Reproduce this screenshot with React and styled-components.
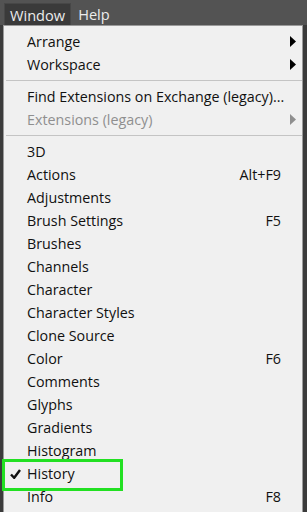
import React from "react";
import styled, { createGlobalStyle } from "styled-components";

const Global = createGlobalStyle`
  html, body { margin: 0; padding: 0; background: #3d3d3d; }
  body { width: 307px; height: 512px; overflow: hidden; font-family: "Open Sans", "Noto Sans", sans-serif; }
`;

const Screen = styled.div`
  width: 307px;
  height: 512px;
  display: flex;
  flex-direction: column;
  background: #3b3b3b;
  overflow: hidden;
  position: relative;
`;

const MenuBar = styled.div`
  height: 25px;
  flex: none;
  background: #535353;
  display: flex;
  align-items: flex-end;
  padding-left: 4px;
  box-sizing: border-box;
`;

const BarItem = styled.div`
  height: 22px;
  padding: 0 ${(p) => (p.$active ? "5px" : "7px")};
  display: flex;
  align-items: center;
  color: #ececec;
  font-size: 14.6px;
  box-sizing: border-box;
  background: ${(p) => (p.$active ? "#3a3a3a" : "transparent")};
  border: ${(p) => (p.$active ? "1px solid #474747" : "none")};
  border-bottom: none;
`;

const Body = styled.div`
  flex: 1;
  display: flex;
  padding-left: 3px;
  min-height: 0;
`;

const Menu = styled.div`
  width: 300px;
  flex: none;
  background: #f0f0f0;
  border: 1px solid #9a9a9a;
  border-bottom: none;
  box-sizing: border-box;
  padding-top: 4px;
  display: flex;
  flex-direction: column;
`;

const Item = styled.div`
  height: 23px;
  flex: none;
  display: flex;
  align-items: center;
  padding-left: 23px;
  font-size: 14.3px;
  color: ${(p) => (p.$disabled ? "#8f8f8f" : "#111")};
  position: relative;
`;

const Label = styled.span`
  flex: 1;
  white-space: nowrap;
`;

const Shortcut = styled.span`
  white-space: nowrap;
`;

const ArrowCol = styled.span`
  width: 21px;
  flex: none;
  display: flex;
  justify-content: flex-end;
  padding-right: 6px;
  box-sizing: border-box;
`;

const Separator = styled.div`
  height: 9px;
  flex: none;
  display: flex;
  align-items: center;
  padding: 0 0 0 2px;
  &::after {
    content: "";
    flex: 1;
    height: 1px;
    background: #c4c4c4;
  }
`;

const Check = styled.svg`
  position: absolute;
  left: 6px;
  top: 7px;
`;

const Highlight = styled.div`
  position: absolute;
  left: 2px;
  top: 459px;
  width: 121px;
  height: 32px;
  border: 3px solid #22e022;
  box-sizing: border-box;
  pointer-events: none;
`;

const Arrow = ({ color = "#000" }) => (
  <svg width="6" height="11" viewBox="0 0 6 11">
    <path d="M0 0 L6 5.5 L0 11 Z" fill={color} />
  </svg>
);

const items = [
  { t: "3D" },
  { t: "Actions", s: "Alt+F9" },
  { t: "Adjustments" },
  { t: "Brush Settings", s: "F5" },
  { t: "Brushes" },
  { t: "Channels" },
  { t: "Character" },
  { t: "Character Styles" },
  { t: "Clone Source" },
  { t: "Color", s: "F6" },
  { t: "Comments" },
  { t: "Glyphs" },
  { t: "Gradients" },
  { t: "Histogram" },
  { t: "History", c: true },
  { t: "Info", s: "F8" },
];

export default function App() {
  return (
    <>
      <Global />
      <Screen>
        <MenuBar>
          <BarItem $active>Window</BarItem>
          <BarItem>Help</BarItem>
        </MenuBar>
        <Body>
          <Menu>
            <Item>
              <Label>Arrange</Label>
              <ArrowCol><Arrow /></ArrowCol>
            </Item>
            <Item>
              <Label>Workspace</Label>
              <ArrowCol><Arrow /></ArrowCol>
            </Item>
            <Separator />
            <Item>
              <Label>Find Extensions on Exchange (legacy)...</Label>
              <ArrowCol />
            </Item>
            <Item $disabled>
              <Label>Extensions (legacy)</Label>
              <ArrowCol><Arrow color="#8f8f8f" /></ArrowCol>
            </Item>
            <Separator />
            {items.map((it) => (
              <Item key={it.t}>
                {it.c && (
                  <Check width="11" height="10" viewBox="0 0 11 10">
                    <path d="M1 5.5 L4.2 8.8 L10 1" stroke="#111" strokeWidth="2.4" fill="none" />
                  </Check>
                )}
                <Label>{it.t}</Label>
                {it.s && <Shortcut>{it.s}</Shortcut>}
                <ArrowCol />
              </Item>
            ))}
          </Menu>
        </Body>
        <Highlight />
      </Screen>
    </>
  );
}
